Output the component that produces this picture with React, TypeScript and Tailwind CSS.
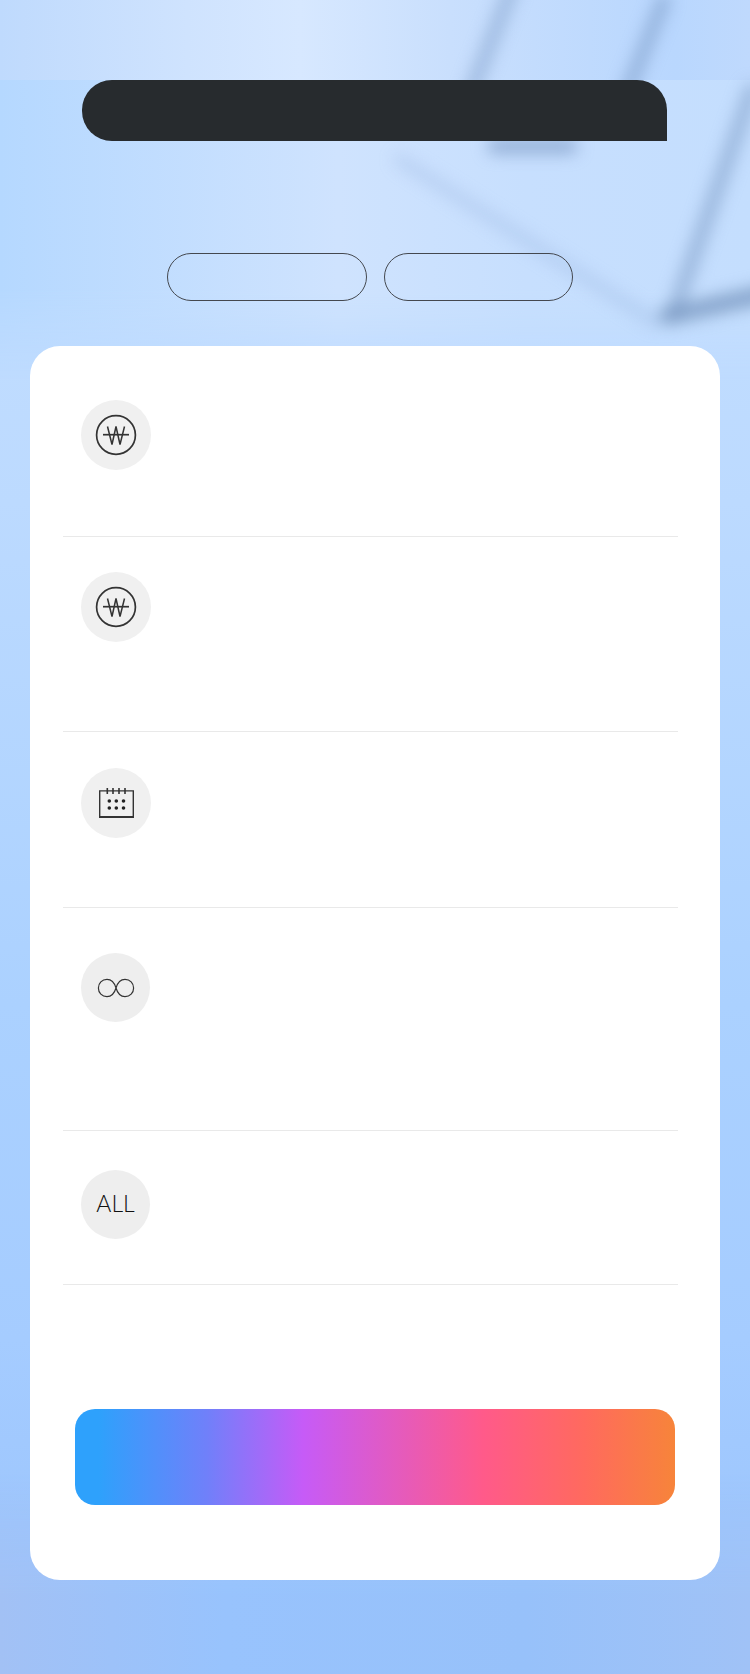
import React from "react";

function Won() {
  return (
    <svg width="42" height="42" viewBox="0 0 42 42" fill="none" stroke="#333" strokeWidth="1.5">
      <circle cx="21" cy="21" r="19.4" strokeWidth="1.7" />
      <path d="M12.5 12.5 L17 30.5 L21 12.5 L25 30.5 L29.5 12.5" strokeWidth="1.5" />
      <path d="M8 20.7 H34" strokeWidth="1.7" />
    </svg>
  );
}

function Calendar() {
  const dots: [number, number][] = [
    [10.3, 13], [17.3, 13], [24.5, 13],
    [10.3, 20], [17.3, 20], [24.5, 20],
  ];
  return (
    <svg width="35" height="30" viewBox="0 0 35 30" fill="none" stroke="#333">
      <path d="M0.7 2.9 H34.3 V29 H0.7 Z" strokeWidth="1.4" />
      <path d="M0 29 H35" strokeWidth="1.8" />
      {[8.3, 14, 20, 26].map((x) => (
        <path key={x} d={`M${x} 0 V6`} strokeWidth="1.6" />
      ))}
      {dots.map(([x, y]) => (
        <circle key={`${x}-${y}`} cx={x} cy={y} r="1.8" fill="#222" stroke="none" />
      ))}
    </svg>
  );
}

function Infinity8() {
  return (
    <svg width="38" height="20" viewBox="0 0 38 20" fill="none" stroke="#333" strokeWidth="1.2">
      <path d="M19 10 C17.5 5 14 1.4 10 1.4 C5 1.4 1.4 5 1.4 10 C1.4 15 5 18.6 10 18.6 C14 18.6 17.5 15 19 10 C20.5 5 24 1.4 28 1.4 C33 1.4 36.6 5 36.6 10 C36.6 15 33 18.6 28 18.6 C24 18.6 20.5 15 19 10 Z" />
    </svg>
  );
}

function Row({
  top,
  height,
  size,
  bg,
  children,
}: {
  top: string;
  height: string;
  size: string;
  bg: string;
  children: React.ReactNode;
}) {
  return (
    <div className={`${top} ${height} box-border pl-[18px] border-b border-[#e9e9e9]`}>
      <div className={`${size} ${bg} rounded-full flex items-center justify-center`}>{children}</div>
    </div>
  );
}

export default function App() {
  return (
    <div className="relative w-[750px] h-[1674px] overflow-hidden bg-[#a9cffe]">
      <div className="absolute inset-0 bg-[linear-gradient(180deg,#bcdaff_0%,#c3deff_12%,#bcdaff_30%,#abd1ff_60%,#a5ccff_80%,#98c2fc_100%)]" />
      <div className="absolute left-0 top-0 w-full h-[80px] bg-[linear-gradient(90deg,#bfdafd_0%,#cfe3fe_25%,#d7e8ff_40%,#c9dffd_60%,#b9d7fe_90%,#bfd9fd_100%)]" />
      <div className="absolute left-0 top-[80px] w-full h-[300px] bg-[linear-gradient(90deg,#b5d8ff_0%,#cfe3fe_45%,#c7dffe_70%,#c4defe_100%)] [mask-image:linear-gradient(180deg,#000_70%,transparent_100%)]" />
      <div className="absolute left-0 bottom-0 w-full h-[200px] bg-[linear-gradient(90deg,#a2c1f5_0%,#98c3fd_30%,#97c1fa_70%,#a0c2f6_100%)] [mask-image:linear-gradient(180deg,transparent_0%,#000_60%)]" />

      <svg className="absolute left-0 top-0" width="750" height="380" viewBox="0 0 750 380" fill="none">
        <g style={{ filter: "blur(8px)" }} strokeLinecap="round">
          <path d="M512 -12 L472 90" stroke="#7d9cc8" strokeWidth="14" opacity="0.55" />
          <path d="M664 0 L628 90" stroke="#7796c3" strokeWidth="13" opacity="0.6" />
          <path d="M495 146 L570 146" stroke="#7592bf" strokeWidth="16" opacity="0.6" />
          <path d="M400 160 L655 322" stroke="#88a6d4" strokeWidth="12" opacity="0.28" />
          <path d="M752 90 L674 312" stroke="#7594c0" strokeWidth="14" opacity="0.55" />
          <path d="M668 316 L765 294" stroke="#7391bb" strokeWidth="18" opacity="0.75" />
        </g>
      </svg>

      <div className="relative pt-[80px]">
        <div className="ml-[82px] w-[585px] h-[61px] bg-[#272b2e] rounded-l-[30px] rounded-tr-[30px]" />

        <div className="mt-[112px] ml-[167px] flex gap-[17px]">
          <div className="w-[200px] h-[48px] rounded-full border border-[#44484f]" />
          <div className="w-[189px] h-[48px] rounded-full border border-[#44484f]" />
        </div>

        <div className="mt-[45px] ml-[30px] w-[690px] h-[1234px] bg-white rounded-[30px] box-border px-[33px]">
          <div className="w-[615px]">
            <Row top="pt-[54px]" height="h-[191px]" size="w-[70px] h-[70px]" bg="bg-[#f0f0f0]">
              <Won />
            </Row>
            <Row top="pt-[35px]" height="h-[195px]" size="w-[70px] h-[70px]" bg="bg-[#f0f0f0]">
              <Won />
            </Row>
            <Row top="pt-[36px]" height="h-[176px]" size="w-[70px] h-[70px]" bg="bg-[#f0f0f0]">
              <Calendar />
            </Row>
            <Row top="pt-[45px]" height="h-[223px]" size="w-[69px] h-[69px]" bg="bg-[#eeeeee]">
              <Infinity8 />
            </Row>
            <Row top="pt-[39px]" height="h-[154px]" size="w-[69px] h-[69px]" bg="bg-[#eeeeee]">
              <span className="pb-[2px] text-[23px] leading-none font-light text-[#111] font-['Lato',sans-serif]">ALL</span>
            </Row>
          </div>
          <div className="mt-[124px] ml-[12px] w-[600px] h-[96px] rounded-[20px] bg-[linear-gradient(90deg,#2ea1fc_0%,#2ea1fc_4%,#7080fa_22%,#c65bf7_38%,#ff5a8a_68%,#ff6a5e_85%,#f7843a_100%)]" />
        </div>
      </div>
    </div>
  );
}
